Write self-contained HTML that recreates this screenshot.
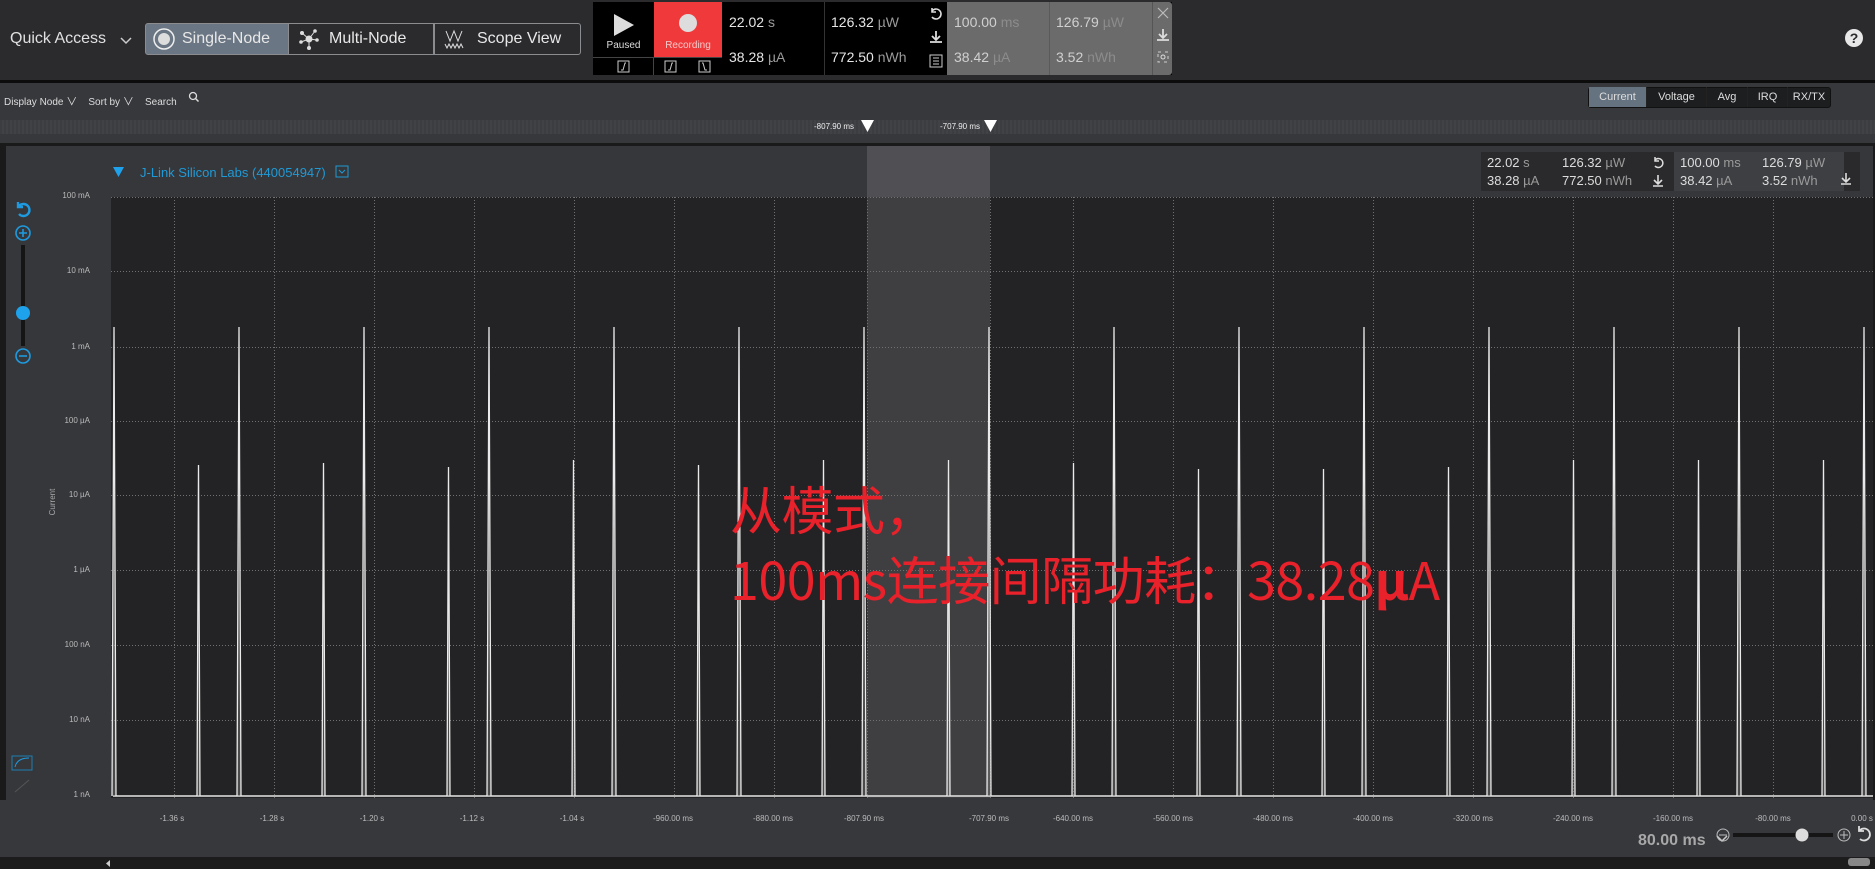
<!DOCTYPE html>
<html><head><meta charset="utf-8"><style>
*{margin:0;padding:0;box-sizing:border-box}
body{width:1875px;height:869px;background:#2b2b2e;position:relative;overflow:hidden;font-family:"Liberation Sans","Noto Sans CJK SC",sans-serif;color:#ddd}
.a{position:absolute}
.seg{position:absolute;top:23px;height:32px;border:1px solid #8a8c90;display:flex;align-items:center;font-size:16px;color:#e8e8e8}
.val{position:absolute;font-size:14px;color:#e6e6e6;white-space:nowrap}
.val i{font-style:normal;color:#9a9a9a}
.g .val{color:#d0d0d0}
.g .val i{color:#8c8c8c}
.tab{position:absolute;top:87px;height:20px;font-size:11px;line-height:20px;text-align:center;color:#ddd;border-right:1px solid #222}
.sm{font-size:13px;color:#ddd;position:absolute;white-space:nowrap}
.sm i{font-style:normal;color:#9a9a9a}
</style></head><body>
<div class="a" style="left:10px;top:30px;font-size:16px;color:#e0e0e0">Quick Access</div>
<svg class="a" style="left:119px;top:36px" width="14" height="10"><path d="M2 2l5 5 5-5" stroke="#ccc" stroke-width="1.5" fill="none"/></svg>
<div class="seg" style="left:145px;width:144px;background:#6a7684;border-radius:3px 0 0 3px">
 <svg style="margin:0 6px 0 6px" width="24" height="24"><circle cx="12" cy="12" r="10" stroke="#eee" stroke-width="1.5" fill="none"/><circle cx="12" cy="12" r="6" fill="#ddd"/></svg>Single-Node</div>
<div class="seg" style="left:288px;width:146px;background:#2b2b2e">
 <svg style="margin:0 8px 0 8px" width="24" height="24"><g fill="#ddd"><circle cx="12" cy="12" r="3.5"/><circle cx="5" cy="6" r="2"/><circle cx="18" cy="4" r="1.8"/><circle cx="4" cy="15" r="1.8"/><circle cx="20" cy="13" r="1.8"/><circle cx="12" cy="21" r="2"/></g><path d="M12 12L5 6M12 12L18 4M12 12L4 15M12 12L20 13M12 12L12 21" stroke="#ddd"/></svg>Multi-Node</div>
<div class="seg" style="left:434px;width:147px;background:#2b2b2e;border-radius:0 3px 3px 0">
 <svg style="margin:0 8px 0 8px" width="26" height="22"><path d="M3 3l4 10 4-10 4 10 4-10M2 16l2 4 2-4 2 4 2-4 2 4 2-4 2 4 2-4 2 4" stroke="#ddd" fill="none"/></svg>Scope View</div>

<div class="a" style="left:593px;top:2px;width:579px;height:73px;background:#000"></div>
<div class="a" style="left:654px;top:2px;width:68px;height:55px;background:#f0393b"></div>
<svg class="a" style="left:612px;top:12px" width="24" height="26"><path d="M2 2L22 13L2 24Z" fill="#ddd"/></svg>
<div class="a" style="left:593px;top:40px;width:61px;text-align:center;font-size:10px;color:#ddd">Paused</div>
<svg class="a" style="left:678px;top:13px" width="20" height="20"><circle cx="10" cy="10" r="9" fill="#ddd"/></svg>
<div class="a" style="left:654px;top:40px;width:68px;text-align:center;font-size:10px;color:#f6c9c9">Recording</div>
<div class="a" style="left:593px;top:57px;width:129px;height:1px;background:#444"></div>
<div class="a" style="left:653px;top:57px;width:1px;height:18px;background:#444"></div>
<svg class="a" style="left:617px;top:60px" width="13" height="13"><rect x="1" y="1" width="11" height="11" fill="none" stroke="#ccc"/><path d="M4 10h2l2-7h1" stroke="#ccc" fill="none"/></svg>
<svg class="a" style="left:664px;top:60px" width="13" height="13"><rect x="1" y="1" width="11" height="11" fill="none" stroke="#ccc"/><path d="M4 10h2l2-7h1" stroke="#ccc" fill="none"/></svg>
<svg class="a" style="left:698px;top:60px" width="13" height="13"><rect x="1" y="1" width="11" height="11" fill="none" stroke="#ccc"/><path d="M4 3h1l2 7h2" stroke="#ccc" fill="none"/></svg>
<div class="a" style="left:824px;top:2px;width:1px;height:73px;background:#333"></div>
<div class="val" style="left:729px;top:14px">22.02 <i>s</i></div>
<div class="val" style="left:729px;top:49px">38.28 <i>µA</i></div>
<div class="val" style="left:831px;top:14px">126.32 <i>µW</i></div>
<div class="val" style="left:831px;top:49px">772.50 <i>nWh</i></div>
<svg class="a" style="left:927px;top:5px" width="18" height="68"><path d="M5 6a5 5 0 1 1 0 6M5 3v4h4" stroke="#ddd" stroke-width="1.6" fill="none"/><path d="M9 26v8M5 31l4 4 4-4M3 37h12" stroke="#ddd" stroke-width="1.8" fill="none"/><rect x="3" y="50" width="12" height="12" stroke="#ccc" fill="none"/><path d="M6 53h6M6 56h6M6 59h6" stroke="#ccc"/></svg>
<div class="a g" style="left:947px;top:2px;width:225px;height:73px;background:#6b6b6b;border-radius:0 3px 3px 0">
 <div class="a" style="left:102px;top:0;width:1px;height:73px;background:#5a5a5a"></div>
 <div class="a" style="left:205px;top:0;width:1px;height:73px;background:#555"></div>
 <div class="val" style="left:7px;top:12px">100.00 <i>ms</i></div>
 <div class="val" style="left:7px;top:47px">38.42 <i>µA</i></div>
 <div class="val" style="left:109px;top:12px">126.79 <i>µW</i></div>
 <div class="val" style="left:109px;top:47px">3.52 <i>nWh</i></div>
 <svg class="a" style="left:207px;top:2px" width="18" height="70"><path d="M4 4l10 10M14 4L4 14" stroke="#bbb" stroke-width="1.2"/><path d="M9 25v8M5 30l4 4 4-4M3 36h12" stroke="#ddd" stroke-width="1.8" fill="none"/><rect x="4" y="48" width="10" height="10" fill="none" stroke="#ccc" stroke-dasharray="3 4"/><circle cx="9" cy="53" r="2" stroke="#ddd" fill="none"/></svg>
</div>
<svg class="a" style="left:1844px;top:28px" width="20" height="20"><circle cx="10" cy="10" r="9" fill="#e8e8e8"/><text x="10" y="15" font-size="14" font-weight="bold" text-anchor="middle" fill="#2b2b2e" font-family="Liberation Sans">?</text></svg>

<div class="a" style="left:0;top:80px;width:1875px;height:3px;background:#0c0c0c"></div>
<div class="a" style="left:0;top:83px;width:1875px;height:62px;background:#37383c"></div>
<div class="a" style="left:4px;top:93px;font-size:10px;color:#ddd;white-space:nowrap">Display Node <span style="font-size:11px">∨</span>&nbsp;&nbsp;&nbsp;&nbsp;Sort by <span style="font-size:11px">∨</span>&nbsp;&nbsp;&nbsp;&nbsp;Search</div>
<svg class="a" style="left:188px;top:91px" width="12" height="12"><circle cx="5" cy="5" r="3.5" stroke="#ddd" fill="none" stroke-width="1.3"/><path d="M7.5 7.5l3 3" stroke="#ddd" stroke-width="1.5"/></svg>
<div class="a" style="left:1588px;top:87px;width:243px;height:21px;background:#1d1e20;border:1px solid #111;border-radius:3px"></div>
<div class="tab" style="left:1589px;width:58px;background:#65727f">Current</div>
<div class="tab" style="left:1647px;width:60px">Voltage</div>
<div class="tab" style="left:1707px;width:41px">Avg</div>
<div class="tab" style="left:1748px;width:40px">IRQ</div>
<div class="tab" style="left:1788px;width:42px;border:none">RX/TX</div>
<div class="a" style="left:0;top:120px;width:1875px;height:14px;background:repeating-linear-gradient(90deg,#3c3d41 0 2px,#414246 2px 4px)"></div>
<div class="a" style="left:814px;top:122px;font-size:8px;color:#eee">-807.90 ms</div>
<svg class="a" style="left:861px;top:120px" width="13" height="12"><path d="M0 0h13L6.5 12z" fill="#fff"/></svg>
<div class="a" style="left:940px;top:122px;font-size:8px;color:#eee">-707.90 ms</div>
<svg class="a" style="left:984px;top:120px" width="13" height="12"><path d="M0 0h13L6.5 12z" fill="#fff"/></svg>

<div class="a" style="left:0;top:143px;width:1875px;height:726px;background:#1a1a1b"></div>
<div class="a" style="left:6px;top:146px;width:1867px;height:654px;background:#36373b"></div>
<div class="a" style="left:0;top:800px;width:1875px;height:69px;background:#37383c"></div>
<svg class="a" style="left:0;top:0" width="1875" height="869">
 <rect x="111" y="197" width="1762" height="601" fill="#232325"/>
 <rect x="867" y="146" width="123" height="652" fill="#ffffff" fill-opacity="0.13"/>
 <g stroke="#707070" stroke-width="1" stroke-dasharray="1 2">
  <line x1="111" x2="1873" y1="197.5" y2="197.5"/><line x1="111" x2="1873" y1="271.5" y2="271.5"/><line x1="111" x2="1873" y1="347.5" y2="347.5"/><line x1="111" x2="1873" y1="421.5" y2="421.5"/><line x1="111" x2="1873" y1="495.5" y2="495.5"/><line x1="111" x2="1873" y1="570.5" y2="570.5"/><line x1="111" x2="1873" y1="645.5" y2="645.5"/><line x1="111" x2="1873" y1="720.5" y2="720.5"/>
  <line x1="174.5" x2="174.5" y1="197" y2="798"/><line x1="274.5" x2="274.5" y1="197" y2="798"/><line x1="374.5" x2="374.5" y1="197" y2="798"/><line x1="474.5" x2="474.5" y1="197" y2="798"/><line x1="574.5" x2="574.5" y1="197" y2="798"/><line x1="674.5" x2="674.5" y1="197" y2="798"/><line x1="774.5" x2="774.5" y1="197" y2="798"/><line x1="867.5" x2="867.5" y1="197" y2="798"/><line x1="990.5" x2="990.5" y1="197" y2="798"/><line x1="1073.5" x2="1073.5" y1="197" y2="798"/><line x1="1173.5" x2="1173.5" y1="197" y2="798"/><line x1="1273.5" x2="1273.5" y1="197" y2="798"/><line x1="1373.5" x2="1373.5" y1="197" y2="798"/><line x1="1473.5" x2="1473.5" y1="197" y2="798"/><line x1="1573.5" x2="1573.5" y1="197" y2="798"/><line x1="1673.5" x2="1673.5" y1="197" y2="798"/><line x1="1773.5" x2="1773.5" y1="197" y2="798"/>
 </g>
 <g font-size="8" fill="#bbb" text-anchor="end" font-family="Liberation Sans">
  <text x="90" y="198">100 mA</text><text x="90" y="273">10 mA</text><text x="90" y="349">1 mA</text><text x="90" y="423">100 µA</text><text x="90" y="497">10 µA</text><text x="90" y="572">1 µA</text><text x="90" y="647">100 nA</text><text x="90" y="722">10 nA</text><text x="90" y="797">1 nA</text>
 </g>
 <text x="55" y="502" font-size="8" fill="#aaa" transform="rotate(-90 55 502)" text-anchor="middle" font-family="Liberation Sans">Current</text>
 <g font-size="8" fill="#bbb" text-anchor="middle" font-family="Liberation Sans">
  <text x="172" y="821">-1.36 s</text><text x="272" y="821">-1.28 s</text><text x="372" y="821">-1.20 s</text><text x="472" y="821">-1.12 s</text><text x="572" y="821">-1.04 s</text><text x="673" y="821">-960.00 ms</text><text x="773" y="821">-880.00 ms</text><text x="864" y="821">-807.90 ms</text><text x="989" y="821">-707.90 ms</text><text x="1073" y="821">-640.00 ms</text><text x="1173" y="821">-560.00 ms</text><text x="1273" y="821">-480.00 ms</text><text x="1373" y="821">-400.00 ms</text><text x="1473" y="821">-320.00 ms</text><text x="1573" y="821">-240.00 ms</text><text x="1673" y="821">-160.00 ms</text><text x="1773" y="821">-80.00 ms</text><text x="1862" y="821">0.00 s</text>
 </g>
 <line x1="113" x2="1873" y1="796" y2="796" stroke="#e6e6e6" stroke-width="1.5"/>
 <g stroke="#eaeaea" stroke-width="1.3" fill="#888" fill-opacity="0.4">
  <path d="M112 796L114 327L116 796"/><path d="M237 796L239 327L241 796"/><path d="M362 796L364 327L366 796"/><path d="M487 796L489 327L491 796"/><path d="M612 796L614 327L616 796"/><path d="M737 796L739 327L741 796"/><path d="M862 796L864 327L866 796"/><path d="M987 796L989 327L991 796"/><path d="M1112 796L1114 327L1116 796"/><path d="M1237 796L1239 327L1241 796"/><path d="M1362 796L1364 327L1366 796"/><path d="M1487 796L1489 327L1491 796"/><path d="M1612 796L1614 327L1616 796"/><path d="M1737 796L1739 327L1741 796"/><path d="M1862 796L1864 327L1866 796"/>
  <path d="M197 796L198.5 465L200 796"/><path d="M322 796L323.5 463L325 796"/><path d="M447 796L448.5 467L450 796"/><path d="M572 796L573.5 460L575 796"/><path d="M697 796L698.5 465L700 796"/><path d="M822 796L823.5 460L825 796"/><path d="M947 796L948.5 460L950 796"/><path d="M1072 796L1073.5 463L1075 796"/><path d="M1197 796L1198.5 469L1200 796"/><path d="M1322 796L1323.5 469L1325 796"/><path d="M1447 796L1448.5 467L1450 796"/><path d="M1572 796L1573.5 460L1575 796"/><path d="M1697 796L1698.5 460L1700 796"/><path d="M1822 796L1823.5 460L1825 796"/>
 </g>
 <g stroke="#1e9be0" fill="none" stroke-width="1.6">
  <path d="M19 206a6 6 0 1 1 0 8M18 202v5h5" stroke-width="2.4"/>
  <circle cx="23" cy="233" r="7"/><path d="M19 233h8M23 229v8"/>
  <circle cx="23" cy="356" r="7"/><path d="M19 356h8"/>
 </g>
 <rect x="21" y="245" width="4" height="101" fill="#151515"/>
 <circle cx="23" cy="313" r="7" fill="#1ea2ec"/>
 <rect x="12" y="756" width="20" height="14" fill="none" stroke="#1e7fb0"/>
 <path d="M15 767q2-9 14-9" stroke="#1e9be0" fill="none"/>
 <path d="M15 792l14-12" stroke="#555"/>
 <path d="M113 167h11l-5.5 10z" fill="#1ea2ec"/>
 <text x="140" y="177" font-size="13" fill="#1f9ad6" font-family="Liberation Sans">J-Link Silicon Labs (440054947)</text>
 <rect x="336" y="166" width="12" height="11" fill="none" stroke="#1f9ad6"/><path d="M339 170l3 3 3-3" stroke="#1f9ad6" fill="none"/>
 <text x="1638" y="845" font-size="16" font-weight="bold" fill="#a8a8a8" font-family="Liberation Sans">80.00 ms</text>
 <path d="M1717 836l5 5 5-5" stroke="#ccc" fill="none" stroke-width="1.5"/>
 <circle cx="1723" cy="835" r="6" stroke="#bbb" fill="none"/><path d="M1719 835h8" stroke="#bbb"/>
 <rect x="1733" y="833" width="100" height="4" fill="#151515"/>
 <circle cx="1802" cy="835" r="6.5" fill="#ddd"/>
 <circle cx="1844" cy="835" r="6" stroke="#bbb" fill="none"/><path d="M1840 835h8M1844 831v8" stroke="#bbb"/>
 <path d="M1860 830a6 6 0 1 1 0 9M1859 826v5h5" stroke="#ddd" fill="none" stroke-width="1.8"/>
 <rect x="0" y="857" width="1875" height="12" fill="#1c1c1d"/>
 <path d="M110 860v7l-4-3.5z" fill="#ccc"/>
 <rect x="1848" y="858" width="22" height="8" rx="3" fill="#888"/>
</svg>
<div class="a" style="left:1481px;top:152px;width:379px;height:39px;background:#2a2a2c"></div>
<div class="a" style="left:1674px;top:152px;width:170px;height:39px;background:#3e3f43"></div>
<div class="sm" style="left:1487px;top:155px">22.02 <i>s</i></div>
<div class="sm" style="left:1487px;top:173px">38.28 <i>µA</i></div>
<div class="sm" style="left:1562px;top:155px">126.32 <i>µW</i></div>
<div class="sm" style="left:1562px;top:173px">772.50 <i>nWh</i></div>
<svg class="a" style="left:1650px;top:155px" width="16" height="34"><path d="M5 5a4.5 4.5 0 1 1 0 6M5 2v4h4" stroke="#ddd" stroke-width="1.5" fill="none"/><path d="M8 20v8M4 25l4 4 4-4M3 31h10" stroke="#ddd" stroke-width="1.6" fill="none"/></svg>
<div class="sm" style="left:1680px;top:155px">100.00 <i>ms</i></div>
<div class="sm" style="left:1680px;top:173px">38.42 <i>µA</i></div>
<div class="sm" style="left:1762px;top:155px">126.79 <i>µW</i></div>
<div class="sm" style="left:1762px;top:173px">3.52 <i>nWh</i></div>
<svg class="a" style="left:1838px;top:170px" width="16" height="20"><path d="M8 3v8M4 8l4 4 4-4M3 14h10" stroke="#ddd" stroke-width="1.6" fill="none"/></svg>
<div class="a" style="left:730px;top:473px;font-size:52px;line-height:70px;color:#e8212b;font-family:'Noto Sans CJK SC','Liberation Sans',sans-serif;white-space:nowrap;letter-spacing:-0.5px">从模式，<br>100ms连接间隔功耗：38.28<b>μ</b>A</div>
</body></html>
